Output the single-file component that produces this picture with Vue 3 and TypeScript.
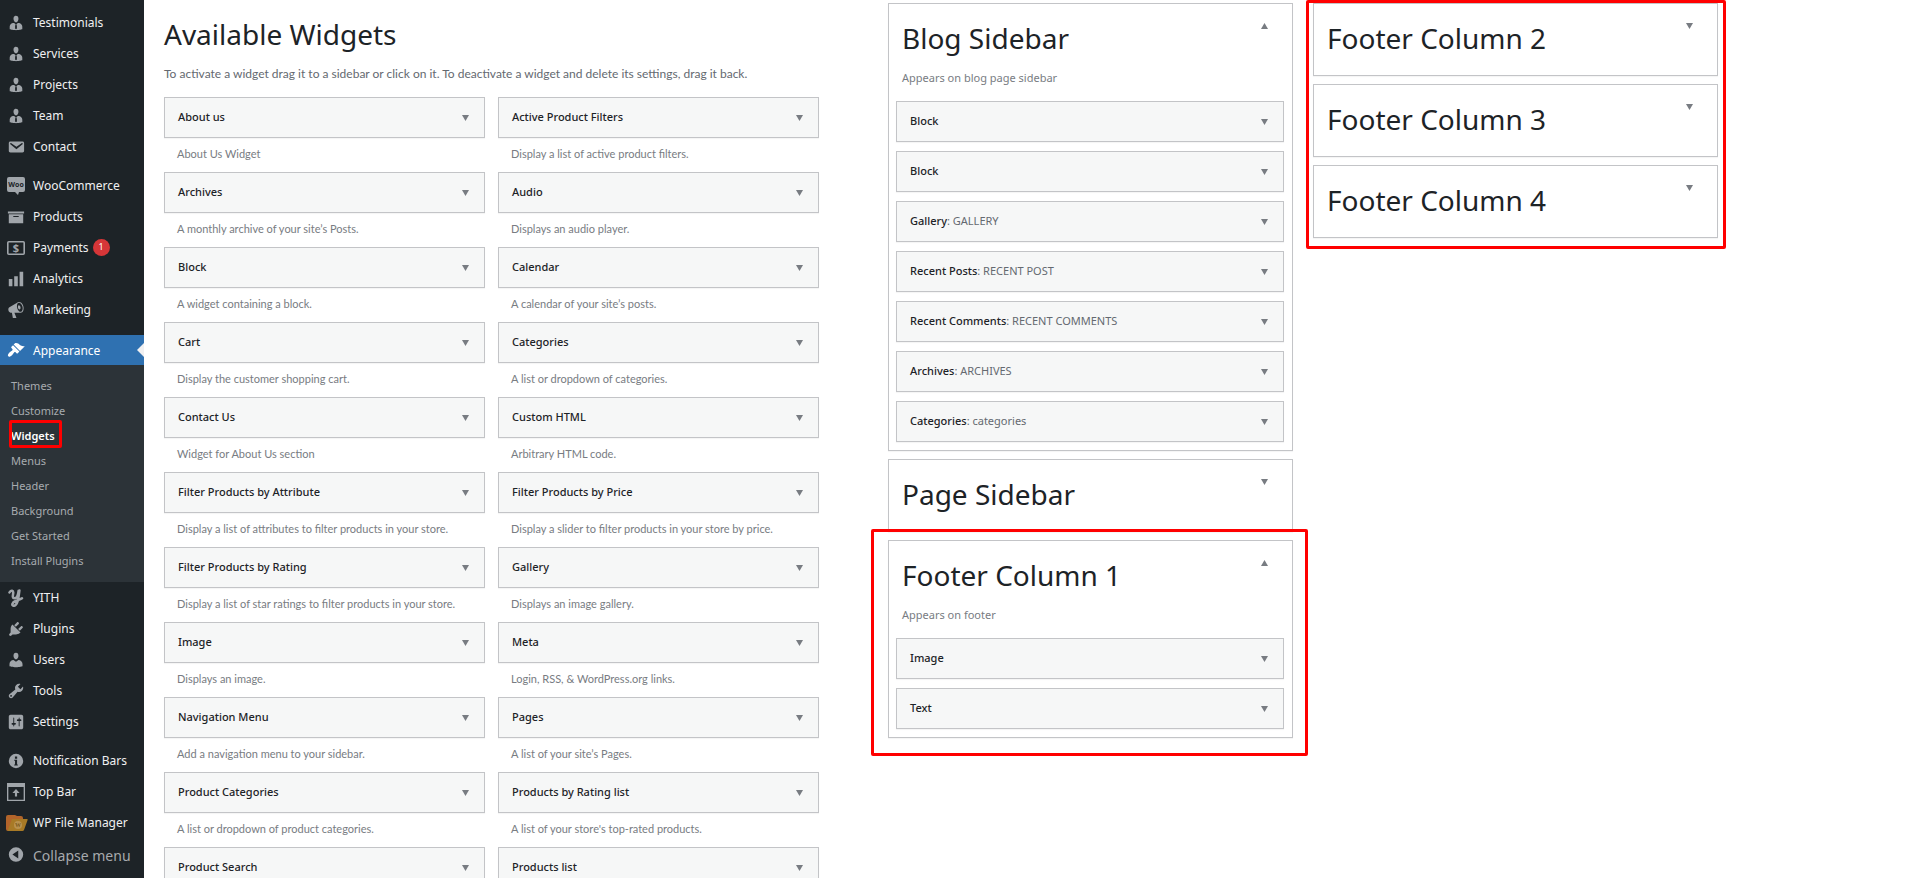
<script setup lang="ts">
import { ref } from 'vue'

interface MenuItem { label: string; icon: string; badge?: number }
interface Widget { name: string; description: string }
interface PlacedWidget { name: string; title?: string }
interface Area { name: string; description?: string; widgets?: PlacedWidget[]; highlighted?: boolean }

const person = 'M7.3 6l-.03-.19c-.04-.37-.05-.73-.03-1.08.02-.36.1-.71.25-1.04.14-.32.31-.61.52-.86s.49-.46.83-.6c.34-.15.72-.23 1.13-.23.69 0 1.26.2 1.71.59s.76.87.91 1.44.18 1.16.09 1.78l-.03.19c-.01.09-.05.25-.11.48-.05.24-.12.47-.2.69-.08.21-.19.45-.34.72-.14.27-.3.49-.47.69-.18.19-.4.34-.67.48-.27.13-.55.19-.86.19s-.59-.06-.87-.19c-.26-.13-.49-.29-.67-.5-.18-.2-.34-.42-.49-.66-.15-.25-.26-.49-.34-.73-.09-.25-.16-.47-.21-.67-.06-.21-.1-.37-.12-.5zm9.2 6.24c.41.7.5 1.41.5 2.14v2.49c0 .03-.12.08-.29.13-.18.04-.42.13-.97.27-.55.12-1.1.24-1.65.34s-1.19.19-1.95.27c-.75.08-1.46.12-2.13.12-.68 0-1.39-.04-2.14-.12-.75-.07-1.4-.17-1.98-.27-.58-.11-1.08-.23-1.56-.34-.49-.11-.8-.21-1.06-.29L3 16.87v-2.49c0-.75.07-1.46.46-2.15s.81-1.25 1.5-1.68C5.66 10.12 7.19 10 8 10l1.67 1.67L9 13v3l1.02 1.08L11 16v-3l-.68-1.33L11.97 10c.77 0 2.2.07 2.9.52.71.45 1.21 1.02 1.63 1.72z'

const paths: Record<string, string> = {
  person,
  email: 'M3.87 4h13.25C18.37 4 19 4.59 19 5.79v8.42c0 1.19-.63 1.79-1.88 1.79H3.87c-1.25 0-1.88-.6-1.88-1.79V5.79c0-1.2.63-1.79 1.88-1.79zm6.62 8.6l6.74-5.53c.24-.2.43-.66.13-1.07-.29-.41-.82-.42-1.17-.17l-5.7 3.86L4.8 5.83c-.35-.25-.88-.24-1.17.17-.3.41-.11.87.13 1.07z',
  archive: 'M19 4v2H1V4h18zM2 7h16v10H2V7zm11 3V9H7v1h6z',
  chart: 'M18 18V2h-4v16h4zm-6 0V7H8v11h4zm-6 0v-8H2v8h4z',
  megaphone: 'M18.15 5.94c.46 1.62.38 3.22-.02 4.48-.42 1.28-1.26 2.18-2.3 2.48-.16.06-.26.06-.4.06-.06.02-.12.02-.18.02-.06.02-.14.02-.22.02h-6.8l2.22 5.5c.02.14-.06.26-.14.34-.08.1-.24.16-.34.16H6.95c-.1 0-.26-.06-.34-.16-.08-.08-.16-.2-.14-.34l-1-5.5H4.25l-.02-.02c-.5.06-1.08-.18-1.54-.62s-.88-1.08-1.06-1.88c-.24-.8-.2-1.56-.02-2.2.18-.62.58-1.08 1.06-1.3l.02-.02 9-5.4c.1-.06.18-.1.24-.16.06-.04.14-.08.24-.12.16-.08.28-.12.5-.18 1.04-.3 2.24.1 3.22.98s1.84 2.24 2.26 3.86zm-2.58 5.98h-.02c.4-.1.74-.34 1.04-.7.58-.7.86-1.76.86-3.04 0-.64-.1-1.3-.28-1.98-.34-1.36-1.02-2.5-1.78-3.24s-1.68-1.1-2.46-.88c-.82.22-1.4.96-1.7 2-.32 1.04-.28 2.36.06 3.72.38 1.36 1 2.5 1.8 3.24.78.74 1.62 1.1 2.48.88zm-2.54-7.08c.22-.04.42-.02.62.04.38.16.76.48 1.02 1s.42 1.2.42 1.78c0 .3-.04.56-.12.8-.18.48-.44.84-.86.94-.34.1-.8-.06-1.14-.4s-.64-.86-.78-1.5c-.18-.62-.12-1.24.02-1.72s.48-.84.82-.94z',
  brush: 'M14.48 11.06L7.41 3.99l1.5-1.5c.5-.56 2.3-.47 3.51.32 1.21.8 1.43 1.28 2.91 2.1 1.18.64 2.45 1.26 4.45.85zm-.71.71L6.7 4.7 4.93 6.47c-.39.39-.39 1.02 0 1.41l1.06 1.06c.39.39.39 1.03 0 1.42-.6.6-1.43 1.11-2.21 1.69-.35.26-.7.53-1.01.84C1.43 14.23.4 16.08 1.4 17.07c.99 1 2.84-.03 4.18-1.36.31-.31.58-.66.85-1.02.57-.78 1.08-1.61 1.69-2.21.39-.39 1.02-.39 1.41 0l1.06 1.06c.39.39 1.02.39 1.41 0z',
  plug: 'M13.11 4.36L9.87 7.6 8 5.73l3.24-3.24c.35-.34 1.05-.2 1.56.32.52.51.66 1.21.31 1.55zm-8 1.77l.91-1.12 9.01 9.01-1.19.84c-.71.71-2.63 1.16-3.82 1.16H6.14L4.9 17.26c-.59.59-1.54.59-2.12 0-.59-.58-.59-1.53 0-2.12l1.24-1.24v-3.88c0-1.13.4-3.19 1.09-3.89zm7.26 3.97l3.24-3.24c.34-.35 1.04-.21 1.55.31.52.51.66 1.21.31 1.55l-3.24 3.25z',
  user: 'M10 9.25c-2.27 0-2.73-3.44-2.73-3.44C7 4.02 7.82 2 9.97 2c2.16 0 2.98 2.02 2.71 3.81 0 0-.41 3.44-2.68 3.44zm0 2.57L12.72 10c2.39 0 4.52 2.33 4.52 4.53v2.49s-3.65 1.13-7.24 1.13c-3.65 0-7.24-1.13-7.24-1.13v-2.49c0-2.25 1.94-4.48 4.47-4.48z',
  wrench: 'M16.68 9.77c-1.34 1.34-3.3 1.67-4.95.99l-5.41 6.52c-.99.99-2.59.99-3.58 0s-.99-2.59 0-3.57l6.52-5.42c-.68-1.65-.35-3.61.99-4.95 1.28-1.28 3.12-1.62 4.72-1.06l-2.89 2.89 2.82 2.82 2.86-2.87c.53 1.58.18 3.39-1.08 4.65zM3.81 16.21c.4.39 1.04.39 1.43 0 .4-.4.4-1.04 0-1.43-.39-.4-1.03-.4-1.43 0-.39.39-.39 1.03 0 1.43z',
  sliders: 'M18 16V4c0-1.1-.9-2-2-2H4c-1.1 0-2 .9-2 2v12c0 1.1.9 2 2 2h12c1.1 0 2-.9 2-2zM8 11h1c.55 0 1 .45 1 1s-.45 1-1 1H8v1.5c0 .28-.22.5-.5.5s-.5-.22-.5-.5V13H6c-.55 0-1-.45-1-1s.45-1 1-1h1V5.5c0-.28.22-.5.5-.5s.5.22.5.5V11zm5-2h-1c-.55 0-1-.45-1-1s.45-1 1-1h1V5.5c0-.28.22-.5.5-.5s.5.22.5.5V7h1c.55 0 1 .45 1 1s-.45 1-1 1h-1v5.5c0 .28-.22.5-.5.5s-.5-.22-.5-.5V9z',
  info: 'M10 2a8 8 0 1 1 0 16 8 8 0 0 1 0-16zM8.8 5v2.4h2.5V5zM8 8.6v1.2h.9v4H8V15h4v-1.2h-.8V8.6z',
  topbar: 'M0 0h20v20H0zM1.500 4.500v14h17v-14zM10 6.800l4 4.200h-2.800v4H8.800v-4H6z',
}

const menuGroups: MenuItem[][] = [
  [
    { label: 'Testimonials', icon: 'person' },
    { label: 'Services', icon: 'person' },
    { label: 'Projects', icon: 'person' },
    { label: 'Team', icon: 'person' },
    { label: 'Contact', icon: 'email' },
  ],
  [
    { label: 'WooCommerce', icon: 'woo' },
    { label: 'Products', icon: 'archive' },
    { label: 'Payments', icon: 'money', badge: 1 },
    { label: 'Analytics', icon: 'chart' },
    { label: 'Marketing', icon: 'megaphone' },
  ],
  [{ label: 'Appearance', icon: 'brush' }],
  [
    { label: 'YITH', icon: 'yith' },
    { label: 'Plugins', icon: 'plug' },
    { label: 'Users', icon: 'user' },
    { label: 'Tools', icon: 'wrench' },
    { label: 'Settings', icon: 'sliders' },
  ],
  [
    { label: 'Notification Bars', icon: 'info' },
    { label: 'Top Bar', icon: 'topbar' },
    { label: 'WP File Manager', icon: 'folder' },
  ],
]

const submenu = ['Themes', 'Customize', 'Widgets', 'Menus', 'Header', 'Background', 'Get Started', 'Install Plugins']
const currentPage = ref('Widgets')

const available: Widget[] = [
  { name: 'About us', description: 'About Us Widget' },
  { name: 'Active Product Filters', description: 'Display a list of active product filters.' },
  { name: 'Archives', description: 'A monthly archive of your site’s Posts.' },
  { name: 'Audio', description: 'Displays an audio player.' },
  { name: 'Block', description: 'A widget containing a block.' },
  { name: 'Calendar', description: 'A calendar of your site’s posts.' },
  { name: 'Cart', description: 'Display the customer shopping cart.' },
  { name: 'Categories', description: 'A list or dropdown of categories.' },
  { name: 'Contact Us', description: 'Widget for About Us section' },
  { name: 'Custom HTML', description: 'Arbitrary HTML code.' },
  { name: 'Filter Products by Attribute', description: 'Display a list of attributes to filter products in your store.' },
  { name: 'Filter Products by Price', description: 'Display a slider to filter products in your store by price.' },
  { name: 'Filter Products by Rating', description: 'Display a list of star ratings to filter products in your store.' },
  { name: 'Gallery', description: 'Displays an image gallery.' },
  { name: 'Image', description: 'Displays an image.' },
  { name: 'Meta', description: 'Login, RSS, & WordPress.org links.' },
  { name: 'Navigation Menu', description: 'Add a navigation menu to your sidebar.' },
  { name: 'Pages', description: 'A list of your site’s Pages.' },
  { name: 'Product Categories', description: 'A list or dropdown of product categories.' },
  { name: 'Products by Rating list', description: "A list of your store's top-rated products." },
  { name: 'Product Search', description: '' },
  { name: 'Products list', description: '' },
]

const columns: { highlighted: boolean; areas: Area[] }[] = [
  {
    highlighted: false,
    areas: [
      {
        name: 'Blog Sidebar',
        description: 'Appears on blog page sidebar',
        widgets: [
          { name: 'Block' },
          { name: 'Block' },
          { name: 'Gallery', title: 'GALLERY' },
          { name: 'Recent Posts', title: 'RECENT POST' },
          { name: 'Recent Comments', title: 'RECENT COMMENTS' },
          { name: 'Archives', title: 'ARCHIVES' },
          { name: 'Categories', title: 'categories' },
        ],
      },
      { name: 'Page Sidebar' },
      {
        name: 'Footer Column 1',
        description: 'Appears on footer',
        widgets: [{ name: 'Image' }, { name: 'Text' }],
        highlighted: true,
      },
    ],
  },
  {
    highlighted: true,
    areas: [{ name: 'Footer Column 2' }, { name: 'Footer Column 3' }, { name: 'Footer Column 4' }],
  },
]
</script>

<template>
  <div class="admin">
    <nav class="menu" aria-label="Main menu">
      <div
        v-for="(group, g) in menuGroups"
        :key="g"
        class="group"
        :class="{ opened: group[0].label === 'Appearance' }"
      >
        <a
          v-for="item in group"
          :key="item.label"
          href="#"
          class="item"
          :class="{ active: item.label === 'Appearance' }"
        >
          <svg v-if="item.icon === 'woo'" class="icon" viewBox="0 0 18 18" aria-hidden="true">
            <path d="M2 0h14a2 2 0 0 1 2 2v11a2 2 0 0 1-2 2h-4l-1 3-3-3H2a2 2 0 0 1-2-2V2a2 2 0 0 1 2-2z" fill="currentColor" />
            <text x="9" y="10" class="woo-text">Woo</text>
          </svg>
          <svg v-else-if="item.icon === 'money'" class="icon" viewBox="0 0 18 18" aria-hidden="true">
            <rect x=".8" y="2.800" width="16.400" height="12.400" rx="1" fill="none" stroke="currentColor" stroke-width="1.600" />
            <text x="9" y="13" class="money-text">$</text>
          </svg>
          <svg v-else-if="item.icon === 'yith'" class="icon" viewBox="0 0 18 18" aria-hidden="true">
            <path d="M2.500 3.400C4.200 1 6.600 1.400 6.200 4.200C5.800 7 5.200 9.200 7.400 9.200C10 9.200 11.200 5.600 11.600 1.800M12.400 1.400C11.600 8 10.800 17 6.600 16.800C4.400 16.600 5 13.400 8.600 12C11 11 13.400 10.400 15 9.200" fill="none" stroke="currentColor" stroke-width="2.500" stroke-linecap="round" />
          </svg>
          <svg v-else-if="item.icon === 'folder'" class="icon folder" viewBox="0 0 22 18" aria-hidden="true">
            <path d="M2 1h7l2 1h4a2 2 0 0 1 2 2v2L13 17H2a2 2 0 0 1-2-2V3a2 2 0 0 1 2-2z" fill="#b2642a" />
            <path d="M6 5h15q1 0 .6 1L18 16q-.4 1-1.500 1H1.500z" fill="#a87a26" />
            <circle cx="12" cy="11" r="4" fill="#b9924f" />
            <text x="12" y="13" class="wp-text">W</text>
          </svg>
          <svg v-else class="icon" viewBox="0 0 20 20" aria-hidden="true">
            <path :d="paths[item.icon]" fill="currentColor" fill-rule="evenodd" />
          </svg>
          <span>{{ item.label }}</span>
          <span v-if="item.badge" class="badge">{{ item.badge }}</span>
        </a>
        <div v-if="group[0].label === 'Appearance'" class="submenu">
          <a
            v-for="page in submenu"
            :key="page"
            href="#"
            class="subitem"
            :class="{ current: page === currentPage }"
            @click.prevent="currentPage = page"
          >{{ page }}<i v-if="page === 'Widgets'" class="frame" /></a>
        </div>
      </div>
      <button type="button" class="collapse">
        <svg class="icon" viewBox="0 0 20 20" aria-hidden="true">
          <path d="M10 1.500a8 8 0 1 1 0 16 8 8 0 0 1 0-16zM12.500 5L6 9.500l6.500 4.500z" fill="currentColor" fill-rule="evenodd" />
        </svg>
        <span>Collapse menu</span>
      </button>
    </nav>

    <main class="content">
      <section class="available">
        <h2 class="title">Available Widgets</h2>
        <p class="intro">To activate a widget drag it to a sidebar or click on it. To deactivate a widget and delete its settings, drag it back.</p>
        <div class="widget-grid">
          <div v-for="w in available" :key="w.name">
            <button type="button" class="card">
              <span class="name">{{ w.name }}</span>
              <svg class="arrow" viewBox="0 0 7 6" aria-hidden="true"><path d="M0 0h7L3.500 6z" /></svg>
            </button>
            <p v-if="w.description" class="about">{{ w.description }}</p>
          </div>
        </div>
      </section>

      <div v-for="(column, c) in columns" :key="c" class="column">
        <div class="stack">
          <section v-for="area in column.areas" :key="area.name" class="area" :class="{ open: area.widgets }">
            <header class="area-head">
              <h2 class="title">{{ area.name }}</h2>
              <button type="button" class="toggle" :aria-label="area.name" :aria-expanded="!!area.widgets">
                <svg class="arrow" viewBox="0 0 7 6" aria-hidden="true">
                  <path :d="area.widgets ? 'M0 6h7L3.500 0z' : 'M0 0h7L3.500 6z'" />
                </svg>
              </button>
            </header>
            <template v-if="area.widgets">
              <p class="area-about">{{ area.description }}</p>
              <div class="placed">
                <button v-for="(w, i) in area.widgets" :key="i" type="button" class="card">
                  <span class="name">{{ w.name }}<span v-if="w.title" class="in-title">: {{ w.title }}</span></span>
                  <svg class="arrow" viewBox="0 0 7 6" aria-hidden="true"><path d="M0 0h7L3.500 6z" /></svg>
                </button>
              </div>
            </template>
            <i v-if="area.highlighted" class="frame" />
          </section>
          <i v-if="column.highlighted" class="frame" />
        </div>
      </div>
    </main>
  </div>
</template>

<style>
body {
  margin: 0;
  background: #fff;
}
</style>

<style scoped>
.admin {
  display: flex;
  height: 100vh;
  overflow: hidden;
  font-family: "Noto Sans", "Open Sans", sans-serif;
  color: #1d2327;
}
h2, p {
  margin: 0;
  font-weight: 400;
}
button {
  font: inherit;
  color: inherit;
  margin: 0;
  padding: 0;
  border: 0;
  background: none;
  text-align: left;
  cursor: pointer;
}
a {
  text-decoration: none;
}

/* Admin menu */
.menu {
  flex: 0 0 144px;
  box-sizing: border-box;
  padding-top: 7px;
  background: #1d2327;
  font-size: 12px;
}
.group {
  margin-bottom: 8px;
}
.group.opened {
  margin: 10px 0 0;
}
.group:nth-last-child(2) {
  margin-bottom: 0;
}
.item {
  position: relative;
  display: flex;
  align-items: center;
  gap: 8px;
  height: 31px;
  padding-left: 7px;
  color: #f0f0f1;
  white-space: nowrap;
}
.icon {
  flex: none;
  width: 18px;
  height: 18px;
  color: #a0a5aa;
}
.folder {
  width: 22px;
  margin: 0 -3px 0 -1px;
}
.woo-text {
  font: 700 7px "Open Sans", sans-serif;
  fill: #1d2327;
  text-anchor: middle;
}
.money-text {
  font: 700 11px "Open Sans", sans-serif;
  fill: currentColor;
  text-anchor: middle;
}
.wp-text {
  font: 700 6px "Liberation Serif", serif;
  fill: #7d5a1c;
  text-anchor: middle;
}
.badge {
  width: 17px;
  height: 17px;
  margin-left: -4px;
  border-radius: 50%;
  background: #d63638;
  color: #fff;
  font-size: 9px;
  line-height: 16px;
  text-align: center;
}
.active {
  height: 30px;
  background: #2f71b1;
  color: #fff;
}
.active .icon {
  color: #fff;
}
.active::after {
  content: "";
  position: absolute;
  right: 0;
  top: 8px;
  border: 7px solid transparent;
  border-left-width: 0;
  border-right-color: #f0f0f1;
}
.submenu {
  display: flex;
  flex-direction: column;
  align-items: flex-start;
  padding: 8px 0 9px 11px;
  background: #2c3338;
  font-size: 11px;
}
.subitem {
  position: relative;
  line-height: 25px;
  color: #a7abaf;
}
.current {
  color: #fff;
  font-weight: 600;
}
.collapse {
  display: flex;
  align-items: center;
  gap: 8px;
  height: 34px;
  padding-left: 7px;
  color: #a7aaad;
  font-size: 14px;
  white-space: nowrap;
}

/* Red callouts */
.frame {
  position: absolute;
  border: 3px solid #f00;
  border-radius: 2px;
  pointer-events: none;
}
.subitem .frame {
  inset: -3px -7px 0 -2px;
}
.area .frame {
  inset: -12px -16px -19px -18px;
}
.stack > .frame {
  inset: -3px -8px -11px -7px;
}

/* Page */
.content {
  flex: 1;
  min-width: 0;
  display: grid;
  grid-template-columns: 655fr 474fr 425fr 187fr;
  align-items: start;
  padding-left: 20px;
}
.column {
  padding-top: 3px;
}
.column:nth-child(2) {
  padding-left: 69px;
}
.column:nth-child(3) {
  padding-left: 20px;
}
.title {
  font-size: 28px;
  line-height: 35px;
}
.available {
  padding-top: 17px;
}
.intro {
  margin: 12px 0 13px;
  font: 12px/20px Lato, sans-serif;
  color: #646970;
}
.widget-grid {
  display: grid;
  grid-template-columns: 1fr 1fr;
  column-gap: 13px;
}
.card {
  display: flex;
  align-items: center;
  justify-content: space-between;
  box-sizing: border-box;
  width: 100%;
  height: 41px;
  padding: 0 15px 0 13px;
  border: 1px solid #c3c4c7;
  background: #f6f7f7;
  box-shadow: 0 1px 1px rgba(0, 0, 0, 0.04);
  font-size: 11px;
  line-height: 15px;
}
.name {
  padding-bottom: 2px;
  font-weight: 500;
}
.in-title {
  font-weight: 400;
  color: #646970;
}
.arrow {
  display: block;
  flex: none;
  width: 7px;
  height: 6px;
  fill: #787c82;
}
.about {
  padding: 0 0 2px 13px;
  font: 11px/32px Lato, sans-serif;
  color: #787c82;
}
.stack {
  position: relative;
  display: flex;
  flex-direction: column;
  gap: 8px;
}
.area {
  position: relative;
  border: 1px solid #c3c4c7;
  background: #fff;
  box-shadow: 0 1px 1px rgba(0, 0, 0, 0.04);
}
.area-head {
  display: flex;
  align-items: flex-start;
  justify-content: space-between;
  padding: 17px 24px 19px 13px;
}
.open .area-head {
  padding-bottom: 12px;
}
.area-about {
  padding: 0 13px 13px;
  font-size: 11px;
  line-height: 20px;
  color: #787c82;
}
.placed {
  display: flex;
  flex-direction: column;
  gap: 9px;
  padding: 0 8px 8px 7px;
}
.toggle {
  padding-top: 2px;
}
</style>
